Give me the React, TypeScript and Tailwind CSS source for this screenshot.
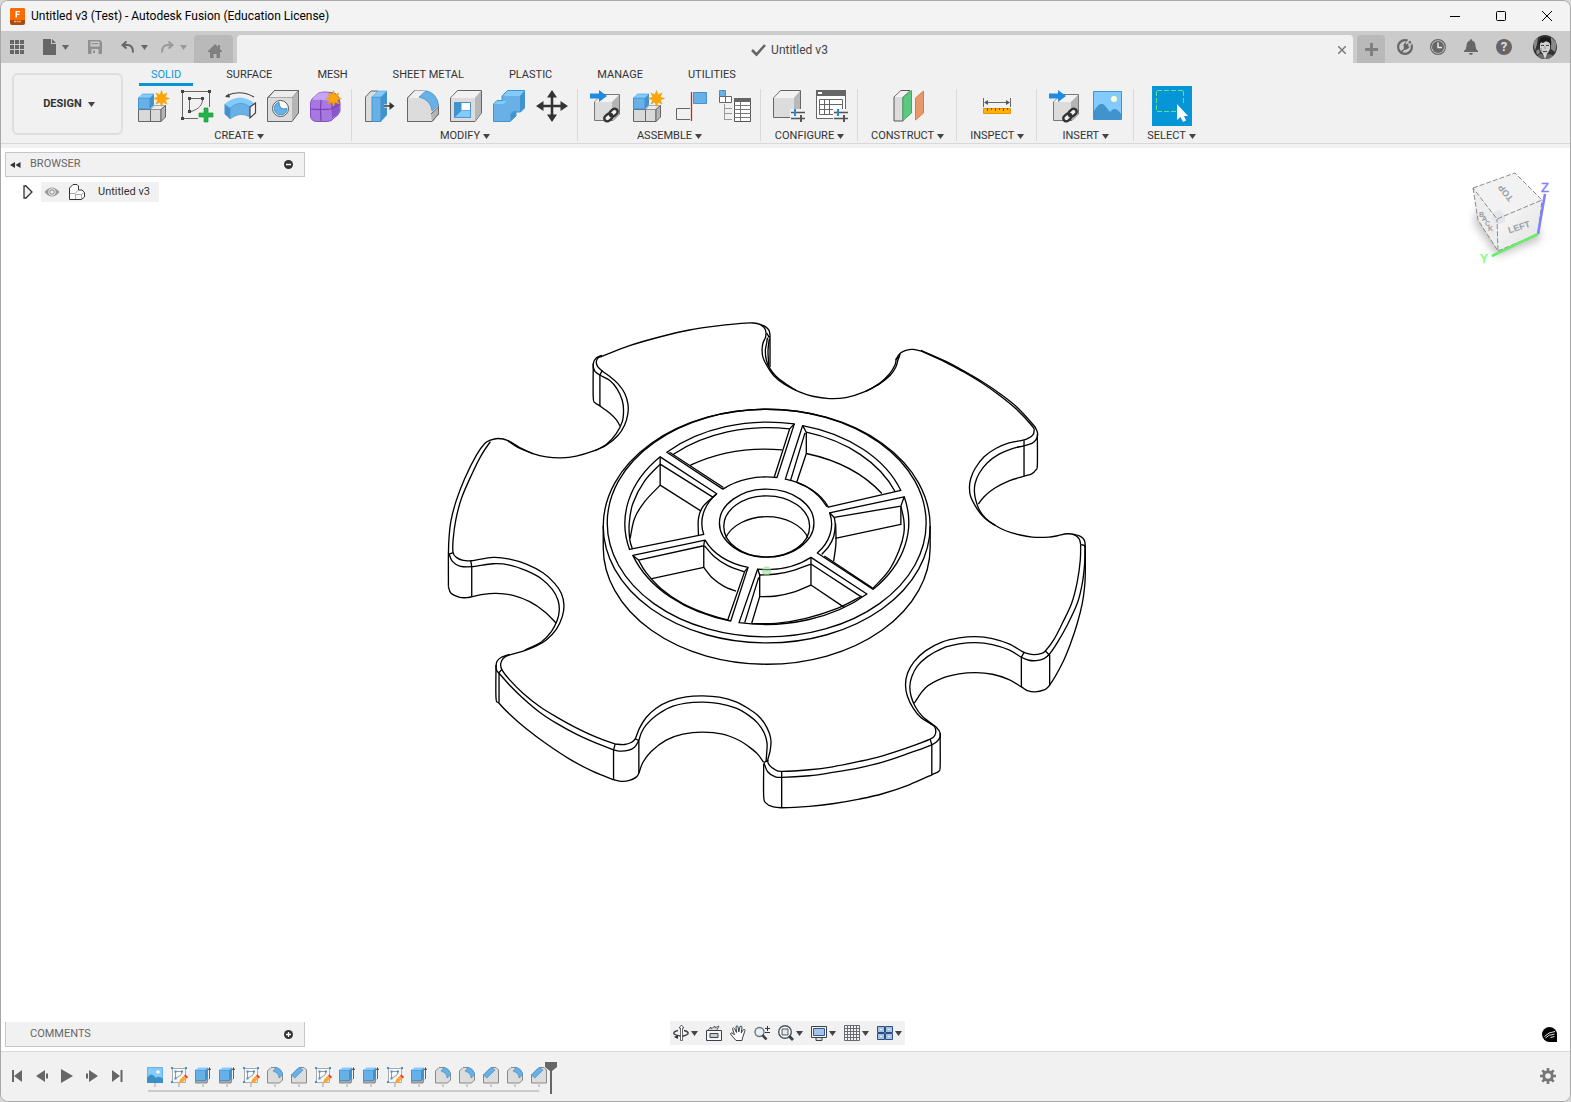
import type { ReactNode } from "react";

type Pt = [number, number];

// Catmull-Rom spline through the points, written out as cubic beziers
const curve = (pts: Pt[]) => {
	let d = `M${pts[0][0]} ${pts[0][1]}`;
	for (let i = 0; i < pts.length - 1; i++) {
		const p0 = pts[i - 1] ?? pts[i];
		const p1 = pts[i];
		const p2 = pts[i + 1];
		const p3 = pts[i + 2] ?? p2;
		d += `C${p1[0] + (p2[0] - p0[0]) / 6} ${p1[1] + (p2[1] - p0[1]) / 6} ${p2[0] - (p3[0] - p1[0]) / 6} ${p2[1] - (p3[1] - p1[1]) / 6} ${p2[0]} ${p2[1]}`;
	}
	return d;
};

const Caret = ({ className = "text-[#444]" }: { className?: string }) => (
	<svg className={className} width="7" height="5" viewBox="0 0 7 5" fill="currentColor" aria-hidden="true">
		<path d="M0 0H7L3.5 5Z" />
	</svg>
);

const Icon = ({ size = 32, children }: { size?: number; children: ReactNode }) => (
	<svg width={size} height={size} viewBox={`0 0 ${size} ${size}`} fill="none" className="shrink-0 overflow-visible" aria-hidden="true">
		{children}
	</svg>
);

const Star = ({ x, y }: { x: number; y: number }) => (
	<path
		transform={`translate(${x} ${y})`}
		d="M0-8L1.5-3.7L5.6-5.6L3.7-1.5L8 0L3.7 1.5L5.6 5.6L1.5 3.7L0 8L-1.5 3.7L-5.6 5.6L-3.7 1.5L-8 0L-3.7-1.5L-5.6-5.6L-1.5-3.7Z"
		fill="#f9a60a"
		stroke="#eb9a00"
		strokeWidth=".5"
	/>
);

const Chain = () => (
	<g transform="translate(21 25) rotate(-42)" stroke="#333" strokeWidth="2.4">
		<path stroke="#f1f1f1" strokeWidth="5" d="M-6 0H6" />
		<rect x="-8" y="-3" width="9" height="6" rx="3" />
		<rect x="-1" y="-3" width="9" height="6" rx="3" />
	</g>
);

const NewComponentIcon = () => (
	<Icon>
		<path d="M.5 19.500H12.500V31.500H.5ZM12.500 19.500H23V31.500H12.500Z" fill="#d9d9d9" stroke="#666" />
		<path d="M12.500 19.500L16 15.500H27.500L23 19.500Z" fill="#ebebeb" stroke="#888" strokeWidth=".7" />
		<path d="M23 19.500L27.500 15.500V27L23 31.500Z" fill="#b5b5b5" stroke="#666" />
		<path d="M.5 8H12V19H.5Z" fill="#68b0e6" stroke="#4193cd" />
		<path d="M.5 8L4.500 4H16L12 8Z" fill="#83caff" stroke="#4ca4e0" strokeWidth=".7" />
		<path d="M12 8L16 4V15L12 19Z" fill="#4193cd" />
		<Star x={23.5} y={8.5} />
	</Icon>
);

const SketchIcon = () => (
	<Icon>
		<path d="M3 1.500H27M1.500 3V27M28.500 3V17M3 28.500H17M10 8.500H20M8.500 10V20M21.500 10C21 17 15 20 10 21.500" stroke="#666" />
		<path d="M0 0H3V3H0ZM27 0H30V3H27ZM0 27H3V30H0ZM7 7H10V10H7ZM20 7H23V10H20ZM7 20H10V23H7Z" fill="#444" />
		<path d="M23 18H27V23H32V27H27V32H23V27H18V23H23Z" fill="#27b34b" stroke="#159b38" strokeWidth=".7" />
	</Icon>
);

const RevolveIcon = () => (
	<Icon>
		<path d="M2 6Q16 -1 30 7" stroke="#444" strokeWidth="1.200" />
		<path d="M1 7L5 3.500L6 7.500Z" fill="#444" />
		<path d="M.5 14Q16 1 31.500 14L26 17Q16 9 6 19L.5 14Z" fill="#83caff" />
		<path d="M.5 14L6 18V29L.5 24Z" fill="#4193cd" />
		<path d="M6 18Q16 9 26 17V27Q16 21 6 29Z" fill="#68b0e6" stroke="#4193cd" strokeWidth=".6" />
		<path d="M26 17L31.500 13V23L26 28Z" fill="#f5f5f5" stroke="#444" strokeWidth="1.200" />
	</Icon>
);

const HoleIcon = () => (
	<Icon>
		<path d="M.5 8L7.500 .5H31.500L25 8Z" fill="#ececec" stroke="#666" />
		<path d="M25 8L31.500 .5V23L25 31.500Z" fill="#b5b5b5" />
		<path d="M.5 8H25V31.500H.5Z" fill="#dcdcdc" />
		<path d="M25 31.500H.5V8L7.500 .5H31.500V23Z" stroke="#666" />
		<circle cx="13.500" cy="18.500" r="8" fill="#fff" stroke="#555" />
		<path d="M12 12.300A6.400 6.400 0 1 0 20 18.500Q12 20.500 12 12.300Z" fill="#68b0e6" stroke="#4193cd" />
	</Icon>
);

const FormIcon = () => (
	<Icon>
		<path d="M.5 13Q1 9 4 7L8 3.500Q10 2 15 2Q23 2 26 4Q30 7 30 13V21Q29 25 24 28Q22 31.500 17 31.500H7Q1 31.500 .5 26Z" fill="#a779e0" stroke="#8650c8" />
		<path d="M2 10Q6 3 11 2.500H17Q24 3 23 8L20 11Q10 9 2 10Z" fill="#c6a5f2" />
		<path d="M21 12L29 10V21Q28 25 22 28Z" fill="#8956c8" />
		<path d="M11 10Q10 20 11 31M.5 19Q11 20 21 19L30 14" stroke="#7540b5" strokeWidth="1.200" />
		<Star x={23.5} y={8.5} />
	</Icon>
);

const PressPullIcon = () => (
	<Icon>
		<path d="M1.500 7L7 1H14V31.500H1.500Z" fill="#ddd" stroke="#666" />
		<path d="M8 7H17V31.500H8Z" fill="#68b0e6" stroke="#4193cd" />
		<path d="M8 7L14 1H23L17 7Z" fill="#83caff" stroke="#4ca4e0" strokeWidth=".6" />
		<path d="M17 7L23 1V25L17 31.500Z" fill="#4193cd" />
		<path d="M20 16H28" stroke="#fff" strokeWidth="3" />
		<path d="M20 16H27" stroke="#333" strokeWidth="1.500" />
		<path d="M25.500 12L30.500 16L25.500 20Z" fill="#333" />
	</Icon>
);

const FilletIcon = () => (
	<Icon>
		<path d="M.5 8L7.500 .5H16Q30 3 31.500 17V24L25 31.500H.5Z" fill="#dcdcdc" stroke="#666" />
		<path d="M24 24L31.500 17V24L25 31.500Z" fill="#b5b5b5" />
		<path d="M.5 8L7.500 .5H19L12 8Z" fill="#efefef" />
		<path d="M12 7L19 .7Q30 3 31.500 15L25 21Q24 10 12 7Z" fill="#68b0e6" stroke="#4193cd" strokeWidth=".7" />
		<path d="M24 24L31.500 17V24L25 31.500H.5V8L7.500 .5" stroke="#666" />
	</Icon>
);

const ShellIcon = () => (
	<Icon>
		<path d="M.5 8L7.500 .5H31.500V23L25 31.500H.5Z" fill="#dcdcdc" stroke="#666" />
		<path d="M1 8L8 1H31L25 8Z" fill="#f2f2f2" />
		<path d="M25 8L31 1V23L25 31Z" fill="#b8b8b8" />
		<path d="M4.500 12.500H20.500V27.500H4.500Z" fill="#fff" stroke="#4193cd" />
		<path d="M4.500 12.500H11.500V20.500L4.500 27.500Z" fill="#4193cd" />
		<path d="M4.500 27.500L11.500 20.500H20.500V27.500Z" fill="#83caff" stroke="#4193cd" strokeWidth=".7" />
	</Icon>
);

const CombineIcon = () => (
	<Icon>
		<path d="M.5 14L4 10.500H9V6L14.500 .5H31.500V18L27.500 22H23V26L17 31.500H.5Z" fill="#68b0e6" stroke="#4193cd" />
		<path d="M1 14L4.500 11H14L10.500 14ZM10 6L14.500 1H31L27 6Z" fill="#83caff" />
		<path d="M27 6L31.500 1V18L27 22ZM17.500 24L22.500 20V26L17.500 31Z" fill="#4193cd" />
	</Icon>
);

const MoveIcon = () => (
	<Icon>
		<path d="M16 5V27M5 16H27" stroke="#333" strokeWidth="2.600" />
		<path d="M16 0L21 7.500H11ZM16 32L21 24.500H11ZM0 16L7.500 11V21ZM32 16L24.500 11V21Z" fill="#333" />
	</Icon>
);

const LinkedBoxIcon = () => (
	<Icon>
		<path d="M4.500 12L12 4.500H29.500V24L23 30.500H4.500Z" fill="#dcdcdc" stroke="#777" />
		<path d="M5 12L12 5H29L22 12Z" fill="#f3f3f3" />
		<path d="M22 12L29 5V24L22 30Z" fill="#b5b5b5" />
		<path d="M0 3.500H9V0L17 6L9 12V8.500H0Z" fill="#1e8ae0" />
		<Chain />
	</Icon>
);

const JointIcon = () => (
	<Icon>
		<path d="M14 18.500H.5V29.500H14" stroke="#666" />
		<path d="M17.500 2.500H30.500V13.500H17.500Z" fill="#68b0e6" stroke="#4193cd" />
		<path d="M15.500 2V31" stroke="#c62828" strokeWidth="1.300" />
	</Icon>
);

const TableTreeIcon = () => (
	<Icon>
		<path d="M.5 .5H6.500V6.500H.5Z" fill="#68b0e6" stroke="#4193cd" />
		<path d="M.5 6.500H6.500V12.500H.5ZM6.500 6.500H12.500V12.500H6.500Z" fill="#fff" stroke="#666" />
		<path d="M5.500 14V30M5.500 18.500H13M5.500 23.500H13M5.500 29.500H13" stroke="#999" />
		<path d="M15.500 8.500H31.500V31.500H15.500Z" fill="#fff" stroke="#555" />
		<path d="M15 8H32V12H15Z" fill="#666" />
		<path d="M15 15.500H32M15 19.500H32M15 23.500H32M15 27.500H32M21.500 12V31" stroke="#777" />
	</Icon>
);

const Sliders = () => (
	<>
		<path d="M17 19H32V32H17Z" fill="#f1f1f1" />
		<path d="M18 22.500H32M18 28.500H32" stroke="#555" strokeWidth="1.600" />
		<path d="M22 19V26" stroke="#1e8ae0" strokeWidth="2" />
		<path d="M28 25V32" stroke="#555" strokeWidth="2" />
	</>
);

const ConfigureBoxIcon = () => (
	<Icon>
		<path d="M.5 8L7.500 .5H27.500V21L22 27.500H.5Z" fill="#dcdcdc" stroke="#666" />
		<path d="M1 8L8 1H27L21 8Z" fill="#f2f2f2" />
		<path d="M21 8L27 1V21L21 27Z" fill="#b8b8b8" />
		<Sliders />
	</Icon>
);

const ConfigureTableIcon = () => (
	<Icon>
		<path d="M.5 .5H29.500V28.500H.5Z" fill="#fff" stroke="#666" />
		<path d="M0 0H30V6H0Z" fill="#666" />
		<path d="M2 2H6V4H2Z" fill="#fff" />
		<path d="M3.500 9.500H26.500V24.500H3.500ZM3.500 14.500H26.500M3.500 19.500H26.500M8.500 9.500V24.500M13.500 9.500V24.500" stroke="#666" />
		<Sliders />
	</Icon>
);

const PlaneIcon = () => (
	<Icon>
		<path d="M2 7L9 .5H18L11 7V31H2Z" fill="#dcdcdc" stroke="#555" />
		<path d="M2.500 7L9 1H17L11 7Z" fill="#f2f2f2" />
		<path d="M11 7.500L19.500 .5V23L11 30.500Z" fill="#5cc882" stroke="#3aad63" />
		<path d="M23.500 8L31.500 1V23L23.500 30Z" fill="#e8996a" stroke="#d9803f" />
	</Icon>
);

const MeasureIcon = () => (
	<Icon>
		<path d="M2.500 8V17M29.500 8V17M4 12.500H28" stroke="#666" />
		<path d="M3 12.500L7 10V15ZM29 12.500L25 10V15Z" fill="#555" />
		<path d="M2.500 18.500H29.500V23.500H2.500Z" fill="#ffb000" stroke="#e39600" />
		<path d="M6.500 18V21M10.500 18V20M14.500 18V21M18.500 18V20M22.500 18V21M26.500 18V20" stroke="#555" />
	</Icon>
);

const CanvasIcon = () => (
	<Icon>
		<path d="M1.500 1.500H29.500V29.500H1.500Z" fill="#83caff" stroke="#4193cd" />
		<path d="M2 21Q9 9 14 17L18 22Q23 15 29 24V29H2Z" fill="#4193cd" />
		<circle cx="22" cy="9" r="3" fill="#ffffd0" />
	</Icon>
);

const SelectIcon = () => (
	<Icon size={40}>
		<path d="M5 4.500H32M5 25.500H24M4.500 5V25M31.500 5V17" stroke="#62e08a" strokeDasharray="5 2" />
		<path d="M25 18V34L28.500 31L31 36L34 34.500L32 30H36Z" fill="#fff" />
	</Icon>
);

const tabs = ["SOLID", "SURFACE", "MESH", "SHEET METAL", "PLASTIC", "MANAGE", "UTILITIES"];

const Tool = ({ label, children }: { label: string; children: ReactNode }) => (
	<button type="button" aria-label={label} className="flex h-10 items-center">
		{children}
	</button>
);

const ToolGroup = ({ label, single = false, last = false, children }: { label: string; single?: boolean; last?: boolean; children: ReactNode }) => (
	<div className="relative flex flex-col items-center">
		<div className={`flex gap-[11px] ${single ? "px-[14px]" : "pl-3 pr-[10px]"}`}>{children}</div>
		<button type="button" className={`flex h-5 items-center gap-[3px] whitespace-nowrap ${single ? "px-[13px]" : ""}`}>
			{label}
			<Caret />
		</button>
		{!last && <div className="absolute right-0 top-[3px] h-[52px] w-px bg-[#d9d9d9]" />}
	</div>
);

const TitleBar = () => (
	<header className="flex h-[30px] items-center bg-[#f3f3f3] pl-[9px] text-[12px] text-black">
		<svg width="15" height="17" viewBox="0 0 15 17" aria-hidden="true">
			<rect width="15" height="17" rx="2" fill="#b04a08" />
			<path d="M2 0H13Q15 0 15 2V12H0V3Z" fill="#ff6b00" />
			<path d="M5.500 9.500V3H10V4.300H7V5.700H9.500V7H7V9.500Z" fill="#fff" />
			<path d="M4 13.500H11" stroke="#e9b489" strokeWidth="1.500" strokeDasharray="2 .6" />
		</svg>
		<h1 className="ml-[6px] flex-1">Untitled v3 (Test) - Autodesk Fusion (Education License)</h1>
		<button type="button" aria-label="Minimize" className="flex h-full w-[46px] items-center justify-center">
			<svg width="10" height="10" stroke="#000" aria-hidden="true"><path d="M0 5.500H10" /></svg>
		</button>
		<button type="button" aria-label="Maximize" className="flex h-full w-[46px] items-center justify-center">
			<svg width="10" height="10" stroke="#000" fill="none" aria-hidden="true"><rect x=".5" y=".5" width="9" height="9" rx="1" /></svg>
		</button>
		<button type="button" aria-label="Close" className="flex h-full w-[46px] items-center justify-center">
			<svg width="10" height="10" stroke="#000" aria-hidden="true"><path d="M0 0L10 10M10 0L0 10" /></svg>
		</button>
	</header>
);

const QuickBar = () => (
	<div className="flex h-8 bg-[#cbcbcb] text-[#666]">
		<div className="flex items-center pl-[9px]">
			<button type="button" aria-label="Data panel">
				<Icon size={14}>
					<path fill="currentColor" d="M0 0H4V4H0ZM5 0H9V4H5ZM10 0H14V4H10ZM0 5H4V9H0ZM5 5H9V9H5ZM10 5H14V9H10ZM0 10H4V14H0ZM5 10H9V14H5ZM10 10H14V14H10Z" />
				</Icon>
			</button>
			<button type="button" aria-label="File" className="ml-[19px] flex items-center gap-[5px]">
				<Icon size={14}>
					<path fill="currentColor" d="M0 0H8V5H13V16H0ZM9 0L13 4H9Z" transform="translate(0 -1)" />
				</Icon>
				<Caret className="text-[#666]" />
			</button>
			<button type="button" aria-label="Save" className="ml-[19px] text-[#909090]">
				<Icon size={14}>
					<path fill="currentColor" fillRule="evenodd" d="M0 0H12L14 2V14H0ZM2.500 1.500V6.500H11.500V1.500ZM3.500 9V14H10.500V9Z" />
					<path fill="currentColor" d="M5 10.500H7V13H5ZM3.500 3H10.500V4.200H3.500Z" />
				</Icon>
			</button>
			<button type="button" aria-label="Undo" className="ml-[19px] flex items-center gap-[6px]">
				<Icon size={14}>
					<path d="M5.500 1.500L1.500 5L5.500 8.500M1.500 5H7Q12 5.500 12 12.500" stroke="currentColor" strokeWidth="2" />
				</Icon>
				<Caret className="text-[#666]" />
			</button>
			<button type="button" aria-label="Redo" className="ml-[12px] flex items-center gap-[6px] text-[#999]">
				<Icon size={14}>
					<path d="M8.500 1.500L12.500 5L8.500 8.500M12.500 5H7Q2 5.500 2 12.500" stroke="currentColor" strokeWidth="2" />
				</Icon>
				<Caret className="text-[#999]" />
			</button>
		</div>
		<button type="button" aria-label="Home" className="ml-[7px] mt-1 flex w-[39px] items-center justify-center rounded-t bg-[#b9b9b9] pl-[2px] pt-[3px] text-[#808080]">
			<Icon size={14}>
				<path fill="currentColor" d="M7 0L10 3V1H12V5L14 7V8H12V14H8.500V10H5.500V14H2V8H0V7Z" />
			</Icon>
		</button>
		<div className="ml-1 mt-1 flex flex-1 items-center rounded-t bg-[#f1f1f1] pl-[6px] pr-[5px] pt-px text-[12px]">
			<div className="flex flex-1 items-center justify-center gap-[5px] text-[#444]">
				<Icon size={15}>
					<path d="M1 8L5.500 12.500L14 3" stroke="#666" strokeWidth="2.600" />
				</Icon>
				Untitled v3
			</div>
			<button type="button" aria-label="Close tab" className="p-[2px]">
				<svg width="8" height="8" stroke="#777" strokeWidth="1.400" aria-hidden="true"><path d="M0 0L8 8M8 0L0 8" /></svg>
			</button>
		</div>
		<button type="button" aria-label="New tab" className="ml-1 mt-1 flex w-7 items-center justify-center rounded-t bg-[#b9b9b9]">
			<svg width="13" height="13" aria-hidden="true"><path d="M6.500 0V13M0 6.500H13" stroke="#808080" strokeWidth="3" /></svg>
		</button>
		<div className="flex items-center gap-[17px] pl-3 pr-[13px]">
			<button type="button" aria-label="Extensions">
				<Icon size={16}>
					<circle cx="8" cy="8" r="6.900" stroke="#666" strokeWidth="2.200" />
					<path d="M3 13L7 9.500L6.500 6Q7 4 9 3L13 7Q12 10 9.500 10.500L7 11L4 15Z" fill="#666" />
					<path d="M9 5L12.500 .5M11.500 7.500L15.500 3.500" stroke="#cbcbcb" strokeWidth="1.600" />
				</Icon>
			</button>
			<button type="button" aria-label="Job status">
				<Icon size={16}>
					<circle cx="8" cy="8" r="7.400" stroke="#666" strokeWidth="1.200" />
					<circle cx="8" cy="8" r="6" fill="#666" />
					<path d="M8 3.500V8.500H12" stroke="#e6e6e6" strokeWidth="1.500" />
				</Icon>
			</button>
			<button type="button" aria-label="Notifications">
				<Icon size={16}>
					<path fill="#666" d="M8 0Q9 0 9 1.500Q12.500 2.500 12.500 7Q12.500 10 15 12V13H1V12Q3.500 10 3.500 7Q3.500 2.500 7 1.500Q7 0 8 0ZM6 14H10Q9.500 16 8 16T6 14Z" />
				</Icon>
			</button>
			<button type="button" aria-label="Help" className="flex size-4 items-center justify-center rounded-full bg-[#666] text-[13px] font-bold leading-4 text-[#e0e0e0]">
				?
			</button>
			<button type="button" aria-label="Account" className="ml-1">
				<svg width="24" height="24" viewBox="0 0 24 24" aria-hidden="true">
					<clipPath id="avatar"><circle cx="12" cy="12" r="12" /></clipPath>
					<g clipPath="url(#avatar)">
						<path d="M0 0H24V24H0Z" fill="#333" />
						<path d="M0 8L5 2L4 9L2 16ZM18 2L24 8L22 17L18 14ZM3 16L6 14L7 18L4 20Z" fill="#8a8a8a" />
						<path d="M7 8Q11 4 17 8L17 14Q15 19 12 20Q8 18 7 14Z" fill="#cfcfcf" />
						<path d="M6 11Q5 2 12 2Q20 2 18 11L16 7L13 6L10 8L8 7Z" fill="#1a1a1a" />
						<path d="M8 10.500H11M13 10.500H16M10 16.500H14" stroke="#444" />
						<path d="M12 11V14M8 13L9 17" stroke="#999" />
						<path d="M3 24Q6 18 9 19L12 22L15 19Q20 19 22 24Z" fill="#6a6a6a" />
						<path d="M10 19L12 24L14 19Z" fill="#ddd" />
					</g>
				</svg>
			</button>
		</div>
	</div>
);

const Ribbon = () => (
	<div className="flex h-[85px] border-b-4 border-[#f1f1f1] bg-[#f1f1f1] text-[11px] text-[#333]">
		<div className="flex flex-1 border-b border-[#d9d9d9] pl-[11px]">
			<button type="button" className="mt-[10px] flex h-[62px] w-[111px] shrink-0 items-center justify-center gap-[6px] rounded-md border-2 border-[#dedede] pl-[3px] pt-px font-bold">
				DESIGN
				<Caret />
			</button>
			<div className="ml-[3px]">
				<nav className="flex h-[23px] gap-[21px] pl-[13px]">
					{tabs.map((tab, i) => (
						<button
							key={tab}
							type="button"
							className={`flex h-full items-center whitespace-nowrap px-3 ${i === 0 ? "border-b-3 border-[#0696d7] pt-1 text-[#0696d7]" : "pt-px"}`}
						>
							{tab}
						</button>
					))}
				</nav>
				<div className="flex">
					<ToolGroup label="CREATE">
						<Tool label="New component"><NewComponentIcon /></Tool>
						<Tool label="Create sketch"><SketchIcon /></Tool>
						<Tool label="Revolve"><RevolveIcon /></Tool>
						<Tool label="Hole"><HoleIcon /></Tool>
						<Tool label="Create form"><FormIcon /></Tool>
					</ToolGroup>
					<ToolGroup label="MODIFY">
						<Tool label="Press pull"><PressPullIcon /></Tool>
						<Tool label="Fillet"><FilletIcon /></Tool>
						<Tool label="Shell"><ShellIcon /></Tool>
						<Tool label="Combine"><CombineIcon /></Tool>
						<Tool label="Move"><MoveIcon /></Tool>
					</ToolGroup>
					<ToolGroup label="ASSEMBLE">
						<Tool label="Insert component"><LinkedBoxIcon /></Tool>
						<Tool label="New component in assembly"><NewComponentIcon /></Tool>
						<Tool label="Joint"><JointIcon /></Tool>
						<Tool label="Bill of materials"><TableTreeIcon /></Tool>
					</ToolGroup>
					<ToolGroup label="CONFIGURE">
						<Tool label="Configure design"><ConfigureBoxIcon /></Tool>
						<Tool label="Configuration table"><ConfigureTableIcon /></Tool>
					</ToolGroup>
					<ToolGroup label="CONSTRUCT" single>
						<Tool label="Offset plane"><PlaneIcon /></Tool>
					</ToolGroup>
					<ToolGroup label="INSPECT" single>
						<Tool label="Measure"><MeasureIcon /></Tool>
					</ToolGroup>
					<ToolGroup label="INSERT">
						<Tool label="Insert derive"><LinkedBoxIcon /></Tool>
						<Tool label="Insert canvas"><CanvasIcon /></Tool>
					</ToolGroup>
					<ToolGroup label="SELECT" single last>
						<button type="button" aria-label="Select" className="size-10 bg-[#0696d7]"><SelectIcon /></button>
					</ToolGroup>
				</div>
			</div>
		</div>
	</div>
);

// body outline, lobes and notches; drawing units are a third of a pixel
const rimCurves: Pt[][] = [
	// top lobe
	[[518, 168], [600, 136], [690, 110], [780, 89], [870, 76], [935, 69], [972, 68], [993, 73], [1006, 84], [1010, 98], [1008, 112], [1001, 128], [998, 150], [1002, 175], [1015, 200], [1035, 228], [1065, 252], [1110, 275], [1150, 288], [1200, 295], [1250, 292], [1305, 275], [1350, 250], [1380, 222], [1397, 195], [1402, 175], [1414, 158], [1430, 150], [1450, 147], [1475, 152]],
	[[990, 71], [1008, 79], [1019, 90], [1022, 105]],
	[[1014, 112], [1012, 128], [1008, 150], [1011, 180], [1022, 205], [1040, 228], [1068, 250], [1100, 270]],
	[[1020, 115], [1016, 150], [1018, 195]],
	[[1413, 160], [1406, 180], [1400, 200], [1383, 225], [1352, 250], [1310, 273]],
	// right upper lobe
	[[1475, 152], [1550, 186], [1600, 213], [1660, 249], [1710, 284], [1760, 325], [1810, 378], [1815, 393], [1811, 405], [1800, 413], [1782, 420], [1740, 428], [1700, 445], [1665, 470], [1638, 505], [1625, 535], [1621, 562], [1625, 590], [1645, 628], [1665, 652], [1695, 674], [1730, 692], [1770, 704], [1810, 711], [1860, 711], [1885, 707], [1915, 701], [1938, 705], [1951, 717], [1955, 733]],
	[[1475, 150], [1552, 184], [1602, 211], [1662, 246], [1714, 281], [1764, 321], [1812, 373], [1822, 388], [1826, 402], [1822, 417], [1810, 429], [1784, 437], [1750, 445], [1710, 462], [1675, 488], [1650, 520], [1638, 550], [1636, 575], [1640, 600], [1650, 628], [1670, 655], [1700, 677]],
	[[1825, 402], [1825, 495], [1820, 510], [1808, 521], [1786, 528], [1740, 542], [1695, 565], [1665, 590], [1648, 612]],
	[[1930, 702], [1953, 708], [1966, 720], [1969, 737]],
	// right lobe
	[[1955, 733], [1954, 780], [1945, 845], [1928, 910], [1900, 970], [1875, 1018], [1849, 1053], [1835, 1061], [1815, 1064], [1800, 1062], [1780, 1055], [1740, 1032], [1690, 1016], [1640, 1010], [1590, 1014], [1540, 1026], [1490, 1052], [1455, 1085], [1435, 1120], [1429, 1155], [1435, 1190], [1452, 1225], [1475, 1253], [1505, 1272], [1516, 1280], [1520, 1295], [1516, 1308], [1503, 1318], [1440, 1342], [1360, 1368], [1290, 1385], [1210, 1401], [1140, 1410], [1057, 1415], [1035, 1408], [1020, 1396], [1015, 1382], [1022, 1355], [1025, 1325], [1020, 1300], [1005, 1270], [985, 1246], [960, 1228], [920, 1206], [870, 1192], [820, 1188], [770, 1191], [720, 1204], [680, 1225], [650, 1253], [630, 1285], [617, 1317], [605, 1328], [585, 1334], [558, 1333]],
	[[1968, 735], [1967, 790], [1960, 850], [1945, 910], [1915, 975], [1885, 1028], [1861, 1063], [1845, 1076], [1822, 1082], [1800, 1081], [1777, 1072], [1740, 1050], [1690, 1034], [1640, 1028], [1590, 1032], [1540, 1045], [1495, 1070], [1465, 1098], [1448, 1130], [1442, 1160], [1446, 1190], [1458, 1220], [1480, 1250], [1510, 1273]],
	[[1969, 737], [1969, 820], [1967, 860], [1960, 910], [1945, 970], [1925, 1030], [1900, 1090], [1862, 1156], [1845, 1170], [1818, 1176], [1795, 1172], [1777, 1161], [1740, 1139], [1690, 1123], [1640, 1118], [1590, 1122], [1540, 1135], [1490, 1163], [1455, 1210]],
	// bottom lobe
	[[1505, 1272], [1520, 1281], [1533, 1300], [1529, 1319], [1508, 1335], [1440, 1360], [1360, 1387], [1290, 1404], [1210, 1418], [1140, 1428], [1057, 1433], [1035, 1430], [1015, 1416], [1004, 1390]],
	[[1533, 1300], [1533, 1400], [1528, 1415], [1508, 1425], [1440, 1455], [1360, 1482], [1290, 1498], [1210, 1512], [1140, 1520], [1057, 1524], [1030, 1521], [1010, 1510], [1003, 1490], [1003, 1392]],
	[[1010, 1385], [1012, 1360], [1013, 1330], [1005, 1300], [985, 1270], [960, 1248], [920, 1225], [870, 1211], [820, 1207], [770, 1210], [720, 1223], [680, 1247], [650, 1275], [635, 1300], [628, 1321], [615, 1342], [595, 1352], [570, 1354], [552, 1350]],
	[[1003, 1388], [985, 1363], [960, 1342], [930, 1322], [880, 1303], [820, 1297], [760, 1303], [710, 1321], [665, 1355], [640, 1388], [628, 1420], [620, 1432], [600, 1442], [577, 1445], [553, 1440]],
	// lower left lobe
	[[558, 1333], [500, 1312], [440, 1284], [380, 1251], [330, 1220], [280, 1180], [240, 1140], [217, 1110], [213, 1092], [221, 1075], [240, 1065], [285, 1052], [320, 1038], [350, 1020], [380, 988], [398, 950], [403, 915], [395, 880], [375, 850], [340, 818], [290, 792], [240, 777], [190, 772], [125, 782], [100, 781], [80, 772], [70, 758], [70, 720], [78, 660], [95, 595], [125, 525], [155, 465], [182, 424]],
	[[240, 1063], [215, 1072], [202, 1084], [199, 1100], [201, 1112], [208, 1120], [240, 1156], [280, 1195], [330, 1237], [380, 1270], [440, 1303], [500, 1330], [552, 1350]],
	[[199, 1095], [199, 1195], [208, 1210], [240, 1243], [290, 1287], [350, 1332], [420, 1378], [490, 1415], [553, 1440]],
	[[58, 762], [68, 784], [90, 798], [125, 800], [190, 791], [240, 795], [290, 812], [335, 836], [368, 868], [385, 900], [389, 930], [383, 960], [365, 995], [335, 1026], [285, 1051]],
	[[56, 860], [64, 880], [90, 892], [110, 893], [128, 890], [160, 883], [200, 880], [250, 886], [300, 905], [345, 935], [380, 970]],
	// left lobe
	[[56, 860], [56, 760], [58, 710], [64, 660], [80, 600], [105, 535], [140, 465], [165, 430], [182, 420], [205, 415], [235, 421], [270, 442], [310, 460], [350, 470], [395, 473], [440, 468], [490, 453], [530, 435], [565, 406], [585, 375], [595, 340], [595, 310], [585, 278], [565, 250], [540, 228], [518, 212], [505, 200], [500, 185], [506, 172], [518, 168]],
	[[235, 422], [262, 440], [310, 461]],
	[[518, 165], [500, 173], [491, 190], [495, 212], [512, 225], [540, 240], [562, 265], [578, 300], [582, 330], [578, 365], [560, 400], [530, 433], [495, 452]],
	[[491, 190], [491, 292], [497, 308], [511, 317], [540, 338], [560, 358], [572, 378]],
];

const rimEdges =
	"M1022 105V200M1012 98L1020 112M1399 178L1412 168M1785 420V528M1955 733L1969 737M1849 1053L1861 1065M1786 1056L1777 1072V1161M1862 1065V1156M1503 1318L1508 1335V1425M1057 1415V1524M1004 1388L1017 1382M617 1317L628 1322V1420M557 1332L552 1350V1440M217 1108L208 1118V1208M58 762L70 758M123 782L126 800V890M518 210L511 225V317";

const hubCurves: Pt[][] = [
	[[622, 247], [655, 262], [688, 288], [713, 320]],
	[[735, 352], [738, 375], [733, 410], [718, 440], [697, 463]],
	[[739, 370], [740, 430], [733, 484]],
	[[935, 318], [944, 360], [944, 400], [930, 450], [900, 510], [852, 564]],
	[[511, 525], [560, 522], [610, 512], [665, 492]],
	[[511, 590], [560, 588], [610, 577], [665, 555]],
	[[818, 588], [740, 627], [650, 655], [560, 670], [487, 671]],
	[[345, 437], [375, 470], [415, 497], [464, 515]],
	[[343, 502], [370, 535], [405, 560], [440, 573]],
	[[147, 480], [170, 518], [215, 566], [280, 611], [350, 641], [415, 660]],
	[[370, 291], [340, 320], [327, 355], [327, 405]],
	[[212, 192], [165, 243], [130, 310], [119, 370], [121, 420], [129, 447]],
	[[212, 255], [165, 305], [135, 355], [122, 415]],
];

// the six pockets between the spokes, then their inner edges
const pockets =
	"M232 156A426 304 0 0 1 615 71L563 232A194 138 0 0 0 400 267Z" +
	"M640 76A426 304 0 0 1 935 271L717 321A194 138 0 0 0 588 237Z" +
	"M945 290A426 304 0 0 1 852 568L684 459A194 138 0 0 0 721 338Z" +
	"M833 582A426 304 0 0 1 449 668L505 507A194 138 0 0 0 665 472Z" +
	"M424 663A426 304 0 0 1 130 466L347 420A194 138 0 0 0 476 502Z" +
	"M120 448A426 304 0 0 1 212 170L382 281A194 138 0 0 0 343 403Z";

const pocketEdges =
	"M252 162A413 295 0 0 1 601 86L555 230M615 71L601 86M240 156L402 262M303 195A413 295 0 0 1 578 149" +
	"M640 76L651 96A413 295 0 0 1 918 275M651 96V160A413 295 0 0 1 878 280M647 98L604 240M651 160L622 247" +
	"M945 290L935 318V373L738 415M721 338L735 352L935 318M705 468L850 564" +
	"M665 472V555L765 622M665 492L815 590M505 507L511 525V590L487 670M508 532L466 668" +
	"M345 422L343 437V502L187 536M343 437L147 480L130 466M476 502L466 514L415 660" +
	"M212 170V255L335 333M212 192L370 291L382 281";

const Model = () => (
	<svg className="absolute inset-0 size-full" viewBox="-1288 -456 4713 2709" fill="none" stroke="#000" strokeWidth="4" strokeLinejoin="round" role="img" aria-label="Sprocket">
		{rimCurves.map((pts, i) => (
			<path key={i} d={curve(pts)} />
		))}
		<path d={rimEdges} />
		<g transform="translate(480 300)">
			<ellipse cx="532" cy="369" rx="479" ry="342" />
			<ellipse cx="532" cy="378" rx="491" ry="351" />
			<path d="M41 378V442A491 351 0 0 0 1023 442V378" />
			<path d={pockets} />
			<path d={pocketEdges} />
			{hubCurves.map((pts, i) => (
				<path key={i} d={curve(pts)} />
			))}
			<ellipse cx="532" cy="369" rx="142" ry="102" />
			<ellipse cx="532" cy="379" rx="129" ry="92" />
			<path d="M409 413A130 92 0 0 1 656 413" />
			<circle cx="532" cy="513" r="12" fill="#8fd88f" fillOpacity=".5" stroke="#8fd88f" strokeOpacity=".5" />
		</g>
	</svg>
);

const ViewCube = () => (
	<svg width="96" height="106" viewBox="1460 164 96 106" className="font-['Liberation_Sans',sans-serif]" role="img" aria-label="View cube">
		<defs>
			<filter id="soft" x="-30%" y="-30%" width="160%" height="160%">
				<feGaussianBlur stdDeviation="4" />
			</filter>
			<linearGradient id="leftFace" x1="0" y1="0" x2="1" y2="1">
				<stop offset="0" stopColor="#fafafa" />
				<stop offset="1" stopColor="#e2e2e2" />
			</linearGradient>
		</defs>
		<path d="M1474 222L1497 256L1540 240L1538 225L1480 205Z" fill="#999" opacity=".6" filter="url(#soft)" />
		<path d="M1473 188L1515 173L1542 200L1497 219Z" fill="#f2f2f2" />
		<path d="M1473 188L1497 219L1498 251L1478 220Z" fill="#ededed" />
		<path d="M1497 219L1542 200L1538 234L1498 251Z" fill="url(#leftFace)" />
		<path d="M1493 213L1500 210L1505 215V222L1497 225L1492 219Z" fill="#e3e7eb" />
		<path d="M1473 188L1515 173L1542 200L1497 219ZM1473 188L1478 220L1498 251L1497 219M1498 251L1538 234L1542 200" stroke="#8a8a8a" strokeDasharray="5 2" fill="none" />
		<path d="M1545 194L1538 234" stroke="#8080ff" strokeWidth="2.500" />
		<path d="M1538 234L1492 256" stroke="#66ee66" strokeWidth="2.500" />
		<g fontSize="9" fontWeight="bold" fill="#9a9ea4" textAnchor="middle">
			<text transform="translate(1508 191) rotate(-128)">TOP</text>
			<text transform="translate(1520 230) rotate(-18)">LEFT</text>
		</g>
		<text fontSize="7" fontWeight="bold" fill="#9a9ea4" x="1479 1482 1485 1488" y="217 221 226 231">BACK</text>
		<text x="1541" y="192" fontSize="13" fill="#8080ff" stroke="#8080ff" strokeWidth=".4">Z</text>
		<text x="1480" y="263" fontSize="12" fill="#80ff80" stroke="#80ff80" strokeWidth=".5">Y</text>
	</svg>
);

const NavItem = ({ label, menu = false, children }: { label: string; menu?: boolean; children: ReactNode }) => (
	<button type="button" aria-label={label} className="flex items-center gap-[2px]">
		<Icon size={16}>{children}</Icon>
		{menu && <Caret />}
	</button>
);

const NavBar = () => (
	<div className="mb-[2px] flex h-6 items-center gap-2 bg-[#f1f1f1] px-[3px]">
		<NavItem label="Orbit" menu>
			<path d="M5 5.500Q0 6.500 1 9Q6 12 12 10.500Q16 9 15 7.500Q14 6 11 5.500" stroke="#3b4148" strokeWidth="1.400" />
			<path d="M8.500 0L11 3H9.500V15.500H7.500V3H6Z" fill="#fff" stroke="#444" strokeWidth=".8" />
			<path d="M1 12L5 9.500V14Z" fill="#333" />
		</NavItem>
		<NavItem label="Look at">
			<path d="M2 5L5 2V4L9 1V3L13 1L11 5" fill="#ddd" stroke="#444" strokeWidth=".8" />
			<path d="M.5 5.500H15.500V15.500H.5Z" fill="#f5f5f5" stroke="#3b4148" />
			<path d="M4 8.500H12V12.500H4Z" fill="#ccc" stroke="#3b4148" />
		</NavItem>
		<NavItem label="Pan">
			<path d="M6 15.500Q3 12 .5 9Q1 7 3 8.500L4.500 10L2.500 3.500Q3.500 2 4.500 3.500L6.500 7.500L6 1.500Q7 0 8 1.500L8.800 7L10 1.500Q11.500 .5 12 2L11.200 8L13.500 4.500Q15 4 15 5.500L12.500 13L12 15.500Z" fill="#fff" stroke="#3b4148" />
		</NavItem>
		<NavItem label="Zoom">
			<circle cx="5.500" cy="7" r="4.500" fill="#e8f1f5" stroke="#6a7680" strokeWidth="1.400" />
			<path d="M8.500 10L12.500 14.500" stroke="#3b4148" strokeWidth="2.600" />
			<path d="M13.500 1V6M11 3.500H16M11 7.500H16" stroke="#333" />
		</NavItem>
		<NavItem label="Zoom window" menu>
			<circle cx="7" cy="7" r="6.300" fill="#fff" stroke="#4a545c" strokeWidth="1.400" />
			<path d="M4 4H10V10H4Z" fill="#dde9ee" stroke="#4a545c" />
			<path d="M11 11L15 15" stroke="#3b4148" strokeWidth="2.800" />
		</NavItem>
		<NavItem label="Display settings" menu>
			<path d="M.5 1.500H15.500V12.500H.5Z" fill="#f5f5f5" stroke="#3b4148" />
			<path d="M2.500 3.500H13.500V10.500H2.500Z" fill="#a5c3e8" stroke="#2f5c94" />
			<path d="M5 13V15.500H11V13" fill="#ddd" stroke="#3b4148" />
		</NavItem>
		<NavItem label="Grid and snaps" menu>
			<path d="M.5 .5H15.500V15.500H.5ZM3.500 .5V15.500M6.500 .5V15.500M9.500 .5V15.500M12.500 .5V15.500M.5 3.500H15.500M.5 6.500H15.500M.5 9.500H15.500M.5 12.500H15.500" fill="#f5f5f5" stroke="#666b72" />
		</NavItem>
		<NavItem label="Viewports" menu>
			<path d="M.5 1.500H7.500V7.500H.5ZM8.500 1.500H15.500V7.500H8.500ZM.5 8.500H7.500V14.500H.5ZM8.500 8.500H15.500V14.500H8.500Z" fill="#a5c3e8" stroke="#2b4f7d" />
			<path d="M3 4.500H5M11 4.500H13M3 11.500H5M11 11.500H13" stroke="#eef4fb" />
		</NavItem>
	</div>
);

const Canvas = () => (
	<main className="relative flex flex-1 flex-col justify-between bg-white text-[11px] text-[#333]">
		<Model />
		<div className="relative flex items-start justify-between pl-1 pt-1">
			<aside className="w-[300px]">
				<div className="flex h-[25px] items-center border border-[#c6c6c6] bg-[#f1f1f1] pl-1 pr-[11px] text-[#666]">
					<button type="button" aria-label="Collapse browser">
						<svg width="11" height="6" fill="#333" aria-hidden="true"><path d="M5 0V6L0 3ZM10.500 0V6L5.500 3Z" /></svg>
					</button>
					<h2 className="ml-[9px] flex-1">BROWSER</h2>
					<button type="button" aria-label="Minimize browser">
						<svg width="9" height="9" aria-hidden="true"><circle cx="4.500" cy="4.500" r="4.500" fill="#333" /><path d="M2 4.500H7" stroke="#fff" strokeWidth="1.500" /></svg>
					</button>
				</div>
				<div className="mt-[5px] flex h-5 items-center pl-[18px]">
					<button type="button" aria-label="Expand">
						<svg width="10" height="14" viewBox="0 0 10 14" fill="#f1f1f1" stroke="#333" strokeWidth="1.300" aria-hidden="true"><path d="M1 1H3L9 7L3 13H1Z" /></svg>
					</button>
					<div className="ml-2 flex h-full items-center bg-[#f1f1f1] pl-[3px] pr-[9px]">
						<button type="button" aria-label="Toggle visibility">
							<Icon size={16}>
								<path d="M.5 8Q8 -1 15.500 8Q8 17 .5 8Z" fill="#999" />
								<circle cx="8" cy="8" r="3.300" stroke="#f1f1f1" />
								<circle cx="8" cy="8" r="1.600" fill="#f1f1f1" />
							</Icon>
						</button>
						<span className="ml-[9px]">
							<Icon size={16}>
								<path d="M.5 4L4 .5H8L9.500 2V6H13L15.500 8.500V13L12.500 15.500H.5Z" fill="#fafafa" stroke="#333" />
								<path d="M1 9.500H6L9.500 6M6.500 10V15M12.500 10.500L15 8.500M6.500 10.500H12.500V15" stroke="#aaa" />
							</Icon>
						</span>
						<span className="ml-[13px] pt-px">Untitled v3</span>
					</div>
				</div>
			</aside>
			<div className="pr-[14px] pt-3">
				<ViewCube />
			</div>
		</div>
		<div className="relative grid grid-cols-[1fr_auto_1fr] items-end pb-1 pl-1">
			<div className="flex h-[25px] w-[300px] items-center border border-t-0 border-[#c6c6c6] bg-[#f1f1f1] pl-6 pr-[11px] text-[#666]">
				<h2 className="flex-1 pt-px">COMMENTS</h2>
				<button type="button" aria-label="Expand comments">
					<svg width="9" height="9" aria-hidden="true"><circle cx="4.500" cy="4.500" r="4.500" fill="#333" /><path d="M2 4.500H7M4.500 2V7" stroke="#fff" strokeWidth="1.300" /></svg>
				</button>
			</div>
			<NavBar />
			<button type="button" aria-label="Assistant" className="mb-[5px] mr-[13px] justify-self-end">
				<Icon size={15}>
					<path d="M7.500 0A7.500 7.500 0 0 1 15 7.500V15H7.500A7.500 7.500 0 0 1 7.500 0Z" fill="#000" />
					<path d="M2.500 9.500L7 6L9 5.500L13 4.500M3.500 11L7.500 8L9 8L12.500 7M8.500 10.500L12.500 9.500" stroke="#fff" strokeWidth=".9" />
				</Icon>
			</button>
		</div>
	</main>
);

type Feature = "canvas" | "sketch" | "extrude" | "fillet" | "chamfer";

const timeline: Feature[] = [
	"canvas", "sketch", "extrude", "extrude", "sketch", "fillet", "chamfer", "sketch", "extrude",
	"extrude", "sketch", "extrude", "fillet", "fillet", "chamfer", "fillet", "chamfer",
];

const FeatureIcon = ({ type }: { type: Feature }) => (
	<Icon size={16}>
		{type === "canvas" && (
			<>
				<path d="M.5 .5H15.500V15.500H.5Z" fill="#83caff" stroke="#68b0e6" />
				<path d="M0 11Q4 5 7 9L9 11Q12 8 16 12V16H0Z" fill="#3b8fc9" />
				<circle cx="11" cy="5" r="1.800" fill="#ffffd0" />
			</>
		)}
		{type === "sketch" && (
			<>
				<path d="M1.500 1.500H14.500V15.500H1.500Z" fill="#f8f8f8" stroke="#aaa" />
				<path d="M4.500 4.500H11L10 8L4.500 11.500Z" stroke="#999" />
				<path d="M0 0H2V2H0ZM14 0H16V2H14ZM0 14H2V16H0ZM3.500 3.500H5.500V5.500H3.500ZM10 3.500H12V5.500H10ZM3.500 10.500H5.500V12.500H3.500Z" fill="#3b8fd0" />
				<path d="M7.500 16.500L9 12.500L13 8.500L16 11L11.500 15.500Z" fill="#f9a93a" />
				<path d="M13 8.500L14.500 7.500L17 10L16 11.500Z" fill="#e8343a" />
			</>
		)}
		{type === "extrude" && (
			<>
				<path d="M.5 14L3 12H13L12 16H.5Z" fill="#aaa" stroke="#888" />
				<path d="M.5 3H10.500V13.500H.5Z" fill="#68b0e6" stroke="#4193cd" />
				<path d="M.5 3L3.500 .5H13L10.500 3Z" fill="#83caff" />
				<path d="M10.500 3L13 .5V11.500L10.500 13.500Z" fill="#4193cd" />
				<path d="M14.500 2V12" stroke="#666" />
				<path d="M13 3L14.500 0L16 3Z" fill="#444" />
			</>
		)}
		{type === "fillet" && (
			<>
				<path d="M.5 4L4 .5H9Q15 2 15.500 8V13L12.500 16H.5Z" fill="#dcdcdc" stroke="#888" />
				<path d="M6 4L9 .5Q15 2 15.500 8L12 11Q12 6 6 4Z" fill="#68b0e6" stroke="#4193cd" strokeWidth=".7" />
			</>
		)}
		{type === "chamfer" && (
			<>
				<path d="M.5 8L8 .5H13L15.500 3V16H.5Z" fill="#dcdcdc" stroke="#888" />
				<path d="M.5 8L8 .5L12 3L4 11Z" fill="#68b0e6" stroke="#4193cd" strokeWidth=".7" />
			</>
		)}
	</Icon>
);

const playback = [
	{ label: "Go to start", d: "M1 2H3V14H1ZM11 2V14L3 8Z" },
	{ label: "Step back", d: "M0 8L9 2V14ZM10 5.500H12V10.500H10Z" },
	{ label: "Play", d: "M0 1L12 8L0 15Z" },
	{ label: "Step forward", d: "M12 8L3 2V14ZM0 5.500H2V10.500H0Z" },
	{ label: "Go to end", d: "M1 2V14L9 8ZM9.500 2H11.500V14H9.500Z" },
];

const Timeline = () => (
	<footer className="flex h-[50px] items-start border-t border-[#d9d9d9] bg-[#f1f1f1]">
		<div className="flex gap-[13px] pl-[10px] pt-4">
			{playback.map(({ label, d }) => (
				<button key={label} type="button" aria-label={label}>
					<svg width="12" height="16" fill="#666" aria-hidden="true"><path d={d} /></svg>
				</button>
			))}
		</div>
		<div className="flex flex-1 pl-5 pt-[15px]">
			<div className="relative flex">
				{timeline.map((type, i) => (
					<button key={i} type="button" aria-label={`${type} ${i + 1}`} className="flex w-6 flex-col items-start">
						<span className="pl-1"><FeatureIcon type={type} /></span>
						<span className="ml-[11px] h-[4px] w-[2px] bg-[#cbcbcb]" />
					</button>
				))}
				<div className="absolute left-[5px] right-[12px] top-[23px] h-[2px] bg-[#cbcbcb]" />
				<svg className="absolute -right-[6px] -top-[5px]" width="12" height="32" fill="#666" aria-hidden="true">
					<path d="M0 0H12V5L7 9V32H5V9L0 5Z" />
				</svg>
			</div>
		</div>
		<button type="button" aria-label="Timeline settings" className="mr-[14px] mt-4">
			<Icon size={16}>
				<circle cx="8" cy="8" r="4.300" stroke="#777" strokeWidth="3" />
				<path d="M8 0V3M8 13V16M0 8H3M13 8H16M2.300 2.300L4.500 4.500M11.500 11.500L13.700 13.700M2.300 13.700L4.500 11.500M11.500 4.500L13.700 2.300" stroke="#777" strokeWidth="2.600" />
			</Icon>
		</button>
	</footer>
);

const App = () => {
	return (
		<div className="min-h-screen bg-[#d6d6d6]">
			<div className="flex h-screen min-h-[600px] flex-col overflow-hidden rounded-lg border border-[#a8a8a8] bg-[#f1f1f1] font-['Roboto',sans-serif]">
				<TitleBar />
				<QuickBar />
				<Ribbon />
				<Canvas />
				<Timeline />
			</div>
		</div>
	);
};

export default App;
